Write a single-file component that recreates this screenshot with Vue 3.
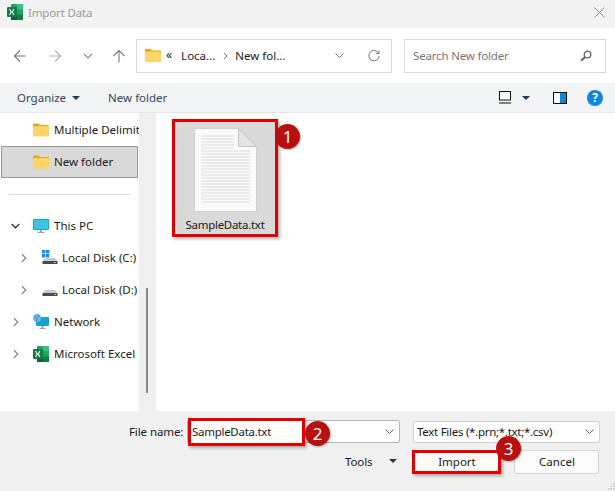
<script setup>
const rows = [
  { label: 'Multiple Delimit', icon: 'folder', indent: 33 },
  { label: 'New folder', icon: 'folder', indent: 33, selected: true },
  { sep: true },
  { label: 'This PC', icon: 'pc', indent: 33, chevron: 'down', chevronAt: 11 },
  { label: 'Local Disk (C:)', icon: 'diskc', indent: 42, text: 62, chevron: 'right', chevronAt: 21 },
  { label: 'Local Disk (D:)', icon: 'disk', indent: 42, text: 62, chevron: 'right', chevronAt: 21 },
  { label: 'Network', icon: 'net', indent: 33, chevron: 'right', chevronAt: 13 },
  { label: 'Microsoft Excel', icon: 'excel', indent: 33, chevron: 'right', chevronAt: 13 },
]
const lines = Array.from({ length: 23 }, (_, i) => i)
</script>

<template>
  <div class="win">
    <header class="title">
      <svg class="xl" width="16" height="16" viewBox="0 0 16 16">
        <rect x="4" width="12" height="16" rx="1" fill="#21a366" />
        <rect x="10" width="6" height="5.3" fill="#33c481" />
        <rect x="4" y="5.3" width="6" height="5.4" fill="#107c41" />
        <rect x="10" y="10.7" width="6" height="5.3" fill="#107c41" />
        <rect x="4" y="10.7" width="6" height="5.3" fill="#185c37" />
        <rect y="3" width="10" height="10" rx="1" fill="#107c41" />
        <path d="M2.6 5l1.6 3-1.6 3M6.900 5L5.300 8l1.600 3M4.200 8h1.100" stroke="#fff" stroke-width="1.100" fill="none" />
      </svg>
      <span class="title-text">Import Data</span>
      <svg class="close" width="11" height="11" viewBox="0 0 11 11"><path d="M.5.500l10 10M10.500.500l-10 10" stroke="#8d8d8d" fill="none" /></svg>
    </header>

    <nav class="nav">
      <svg class="nav-ic" width="14" height="14" viewBox="0 0 14 14"><path d="M13 7H1.500M7 1.500L1.500 7 7 12.500" stroke="#7a7a7a" stroke-width="1.100" fill="none" /></svg>
      <svg class="nav-ic fwd" width="14" height="14" viewBox="0 0 14 14"><path d="M1 7h11.500M7 1.500L12.500 7 7 12.500" stroke="#b4b4b4" stroke-width="1.100" fill="none" /></svg>
      <svg class="nav-ic dn" width="10" height="6" viewBox="0 0 10 6"><path d="M1 1l4 4 4-4" stroke="#8c8c8c" stroke-width="1.100" fill="none" /></svg>
      <svg class="nav-ic up" width="14" height="14" viewBox="0 0 14 14"><path d="M7 13.500V1.500M1.500 7L7 1.500 12.500 7" stroke="#7a7a7a" stroke-width="1.100" fill="none" /></svg>
      <div class="address">
        <svg class="addr-folder" width="16" height="13" viewBox="0 0 16 13">
          <path d="M0 1a1 1 0 011-1h4.500l1.500 1.500h8a1 1 0 011 1V4H0z" fill="#e8a813" />
          <rect y="2.500" width="16" height="10.500" rx="1" fill="#fcd667" />
        </svg>
        <span class="crumb-mark">«</span>
        <span class="crumb first-crumb">Loca...</span>
        <svg width="5" height="8" viewBox="0 0 5 8" class="crumb-sep"><path d="M1 1l3 3-3 3" stroke="#777" fill="none" /></svg>
        <span class="crumb">New fol...</span>
        <svg class="addr-dn" width="9" height="5" viewBox="0 0 9 5"><path d="M.5.500l4 4 4-4" stroke="#777" fill="none" /></svg>
        <svg class="refresh" width="12" height="12" viewBox="0 0 12 12"><path d="M10.600 3.200A5.200 5.200 0 1011.200 6M11 .600v3H8" stroke="#777" stroke-width="1" fill="none" /></svg>
      </div>
      <div class="search">
        <span class="search-text">Search New folder</span>
        <svg width="12" height="12" viewBox="0 0 12 12"><circle cx="7.500" cy="4.500" r="3.300" stroke="#666" stroke-width="1.300" fill="none" /><path d="M5 7L1.200 10.800" stroke="#666" stroke-width="2" /></svg>
      </div>
    </nav>

    <div class="toolbar">
      <span class="tool">Organize</span>
      <i class="caret dark"></i>
      <span class="tool newf">New folder</span>
      <div class="tool-right">
        <svg width="12" height="13" viewBox="0 0 12 13"><rect x=".5" y=".5" width="11" height="8.500" fill="#fff" stroke="#111" /><path d="M0 12h12" stroke="#111" /></svg>
        <i class="caret dark view-caret"></i>
        <svg class="pane" width="14" height="12" viewBox="0 0 14 12"><rect x=".5" y=".5" width="13" height="11" fill="#fff" stroke="#111" /><rect x="7" y="1" width="6" height="10" fill="#0f86d8" /></svg>
        <svg class="help" width="16" height="16" viewBox="0 0 16 16">
          <circle cx="8" cy="8" r="8" fill="#0f84e0" />
          <text x="8" y="12" text-anchor="middle" class="help-q">?</text>
        </svg>
      </div>
    </div>

    <main class="main">
      <aside class="side">
        <template v-for="r in rows" :key="r.label || 'sep'">
          <div v-if="r.sep" class="sep"></div>
          <div v-else class="row" :class="{ selected: r.selected }">
            <svg v-if="r.chevron === 'down'" class="chev" :style="{ left: r.chevronAt + 'px' }" width="9" height="6" viewBox="0 0 9 6"><path d="M.7 1l3.800 3.800L8.300 1" stroke="#333" stroke-width="1.300" fill="none" /></svg>
            <svg v-if="r.chevron === 'right'" class="chev" :style="{ left: r.chevronAt + 'px' }" width="6" height="9" viewBox="0 0 6 9"><path d="M1 .7l3.800 3.800L1 8.300" stroke="#8a8a8a" stroke-width="1.300" fill="none" /></svg>

            <svg class="row-ic" :style="{ left: r.indent + 'px' }" width="16" height="16" viewBox="0 0 16 16">
              <g v-if="r.icon === 'folder'">
                <path d="M0 2.500a1 1 0 011-1h4.500L7 3h8a1 1 0 011 1v2H0z" fill="#e8a813" />
                <rect y="4" width="16" height="10.500" rx="1" fill="#fcd667" />
              </g>
              <g v-if="r.icon === 'pc'">
                <rect y="1" width="16" height="11" rx="1" fill="#1aa3cf" />
                <rect x="1" y="2" width="14" height="9" fill="#3fc3e3" />
                <path d="M7 12h2v2H7zM4.500 14h7v1h-7z" fill="#9aa7ad" />
              </g>
              <g v-if="r.icon === 'diskc'">
                <rect x="0" y="0" width="3.400" height="3.400" fill="#0f8fe0" />
                <rect x="4" y="0" width="3.400" height="3.400" fill="#0f8fe0" />
                <rect x="0" y="4" width="3.400" height="3.400" fill="#0f8fe0" />
                <rect x="4" y="4" width="3.400" height="3.400" fill="#0f8fe0" />
              </g>
              <g v-if="r.icon === 'diskc' || r.icon === 'disk'">
                <path d="M3 8h10l2.500 3.500H.5z" fill="#c9c9c9" />
                <rect x=".5" y="11" width="15" height="3" rx=".5" fill="#4a4a4a" />
                <rect x="12" y="12" width="2" height="1" fill="#7fdc6f" />
              </g>
              <g v-if="r.icon === 'net'">
                <rect x="3" y="3" width="13" height="9" rx="1" fill="#1aa3cf" />
                <path d="M8.500 12h2v2h-2zM6.500 14h6v1h-6z" fill="#9aa7ad" />
                <circle cx="4" cy="4" r="4" fill="#6fb7e6" />
                <path d="M1.500 2.500c2 .5 3 1 2.500 2.500S3 6.500 4 8M5 .500c-.5 1.500.5 2 2 2" stroke="#2f7fc0" fill="none" stroke-width=".8" />
              </g>
              <g v-if="r.icon === 'excel'">
                <rect x="4" width="12" height="16" rx="1" fill="#21a366" />
                <rect x="10" width="6" height="5.300" fill="#33c481" />
                <rect x="4" y="5.300" width="6" height="5.400" fill="#107c41" />
                <rect x="10" y="10.700" width="6" height="5.300" fill="#107c41" />
                <rect x="4" y="10.700" width="6" height="5.300" fill="#185c37" />
                <rect y="3" width="10" height="10" rx="1" fill="#107c41" />
                <path d="M2.600 5l1.600 3-1.600 3M6.900 5L5.300 8l1.600 3M4.200 8h1.100" stroke="#fff" stroke-width="1.100" fill="none" />
              </g>
            </svg>
            <span class="row-text" :style="{ left: (r.text || 54) + 'px' }">{{ r.label }}</span>
          </div>
        </template>
      </aside>

      <div class="track"><div class="thumb"></div></div>

      <section class="files">
        <div class="file">
          <div class="page">
            <svg width="63" height="84" viewBox="0 0 63 84">
              <path d="M.5.500h44l18 18v65H.5z" fill="#fafafa" stroke="#d0d0d0" />
              <path d="M44.500.500v18h18z" fill="#e4e4e4" stroke="#c4c4c4" />
              <path v-for="l in lines" :key="l" :d="`M7 ${8 + l * 3}H${l < 5 ? 40 : 56}`" stroke="#dcdcdc" />
            </svg>
          </div>
          <div class="fname">SampleData.txt</div>
        </div>
      </section>

      <span class="badge b1">1</span>
    </main>

    <footer class="bottom">
      <div class="form-row first">
        <label class="fl">File name:</label>
        <div class="name-input">
          <span class="name-red">SampleData.txt</span>
          <svg class="combo-dn" width="9" height="5" viewBox="0 0 9 5"><path d="M.5.500l4 4 4-4" stroke="#666" fill="none" /></svg>
        </div>
        <div class="type-input">
          <span class="type-text">Text Files (*.prn;*.txt;*.csv)</span>
          <svg width="9" height="5" viewBox="0 0 9 5"><path d="M.5.500l4 4 4-4" stroke="#666" fill="none" /></svg>
        </div>
      </div>
      <div class="form-row second">
        <span class="tools">Tools</span>
        <i class="caret black"></i>
        <button class="btn import">Import</button>
        <button class="btn cancel">Cancel</button>
      </div>
      <span class="badge b2">2</span>
      <span class="badge b3">3</span>
      <svg class="grip" width="7" height="7" viewBox="0 0 7 7" fill="#c4c4c4"><rect x="5" y="0" width="1.500" height="1.500" /><rect x="2.500" y="2.500" width="1.500" height="1.500" /><rect x="5" y="2.500" width="1.500" height="1.500" /><rect x="0" y="5" width="1.500" height="1.500" /><rect x="2.500" y="5" width="1.500" height="1.500" /><rect x="5" y="5" width="1.500" height="1.500" /></svg>
    </footer>
  </div>
</template>

<style scoped>
.win {
  width: 615px;
  height: 491px;
  overflow: hidden;
  background: #fff;
  color: #1a1a1a;
  font-family: "Noto Sans", "Open Sans", sans-serif;
  font-size: 11.500px;
  position: relative;
  display: flex;
  flex-direction: column;
}
.title {
  height: 28px;
  background: #f3f3f3;
  display: flex;
  align-items: center;
  padding: 0 7px;
  flex: none;
}
.xl { margin-right: 5px; margin-top: -4px; }
.title-text { color: #9a9a9a; letter-spacing: -.15px; margin-top: -4px; }
.close { margin-left: auto; margin-top: -4px; margin-right: 3px; }
.nav {
  height: 55px;
  flex: none;
  display: flex;
  align-items: center;
  padding-left: 13px;
}
.nav-ic { flex: none; }
.fwd { margin-left: 21px; }
.dn { margin-left: 21px; }
.up { margin-left: 19px; }
.address {
  width: 256px;
  height: 34px;
  box-sizing: border-box;
  margin-left: 10px;
  border: 1px solid #d9d9d9;
  display: flex;
  align-items: center;
  padding-left: 8px;
}
.crumb-mark { margin-left: 5px; font-size: 12px; margin-top: -3px; }
.crumb { margin-left: 6px; }
.first-crumb { margin-left: 9px; }
.crumb-sep { margin-left: 8px; margin-right: 1px; }
.addr-dn { margin-left: auto; }
.refresh { margin-left: 24px; margin-right: 11px; }
.search {
  width: 202px;
  height: 34px;
  box-sizing: border-box;
  margin-left: 12px;
  border: 1px solid #d9d9d9;
  display: flex;
  align-items: center;
  justify-content: space-between;
  padding: 0 13px 0 8px;
  color: #767676;
}
.search-text { letter-spacing: -.18px; }
.toolbar {
  height: 29px;
  flex: none;
  background: #f3f4f6;
  border-bottom: 1px solid #e6e6e6;
  display: flex;
  align-items: center;
  padding-left: 17px;
  color: #33475b;
}
.caret {
  width: 0;
  height: 0;
  border-left: 4px solid transparent;
  border-right: 4px solid transparent;
  border-top: 4px solid #1f3a5f;
  margin-left: 6px;
}
.caret.black { border-top-color: #333; }
.newf { margin-left: 28px; }
.tool-right {
  margin-left: auto;
  padding-right: 12px;
  display: flex;
  align-items: center;
}
.view-caret { margin-left: 11px; }
.pane { margin-left: 23px; }
.help { margin-left: 20px; }
.help-q { fill: #fff; font-size: 12px; font-weight: 700; font-family: "Noto Sans", sans-serif; }
.main {
  flex: 1;
  min-height: 0;
  display: flex;
  position: relative;
}
.side {
  width: 139px;
  flex: none;
  overflow: hidden;
  padding-top: 1px;
}
.row {
  height: 32px;
  position: relative;
  box-sizing: border-box;
  white-space: nowrap;
}
.row.selected {
  background: #d9d9d9;
  border: 1px solid #999;
  margin-left: 1px;
  width: 137px;
}
.row.selected .row-ic { margin-left: -2px; margin-top: -1px; }
.row.selected .row-text { margin-left: -2px; margin-top: -1px; }
.chev { position: absolute; top: 50%; transform: translateY(-50%); }
.row-ic { position: absolute; top: 8px; }
.row-text { position: absolute; top: 7px; line-height: 18px; }
.sep {
  height: 1px;
  background: #d9d9d9;
  margin: 16px 9px 15px;
}
.track {
  width: 16px;
  flex: none;
  background: #f0f0f0;
  position: relative;
  margin-right: 2px;
  border-right: 1px solid #eee;
}
.thumb {
  position: absolute;
  left: 7px;
  top: 175px;
  width: 2px;
  height: 105px;
  background: #8a8a8a;
}
.files {
  flex: 1;
  padding: 6px 0 0 14px;
}
.file {
  width: 106px;
  height: 118px;
  box-sizing: border-box;
  background: #d9d9d9;
  border: 3px solid #e00000;
  box-shadow: 2px 2px 3px rgba(0, 0, 0, .3);
  display: flex;
  flex-direction: column;
  align-items: center;
  padding-top: 6px;
}
.page { height: 85px; }
.fname { margin-top: 4px; line-height: 16px; letter-spacing: -.28px; }
.badge {
  position: absolute;
  width: 25px;
  height: 25px;
  border-radius: 50%;
  background: #b80f0f;
  color: #fff;
  font-size: 17px;
  text-align: center;
  line-height: 25px;
  box-shadow: 1px 1px 2px rgba(0, 0, 0, .3);
}
.b1 { left: 275px; top: 11px; }
.bottom {
  height: 80px;
  flex: none;
  background: #f0f0f0;
  position: relative;
  margin-top: -2px;
}
.form-row { display: flex; align-items: center; position: relative; }
.first { padding-top: 9px; }
.fl { margin-left: 129px; width: 58px; white-space: nowrap; letter-spacing: -.1px; }
.name-input {
  width: 213px;
  height: 23px;
  box-sizing: border-box;
  background: #fff;
  border: 1px solid #b5b5b5;
  border-radius: 2px;
  display: flex;
  align-items: center;
  justify-content: flex-end;
  padding-right: 5px;
  position: relative;
}
.name-red {
  position: absolute;
  left: 0;
  top: -3px;
  width: 117px;
  height: 28px;
  box-sizing: border-box;
  border: 3px solid #e00000;
  background: #fff;
  box-shadow: 2px 2px 3px rgba(0, 0, 0, .3);
  line-height: 22px;
  padding-left: 1px;
  white-space: nowrap;
  letter-spacing: -.28px;
}
.type-input {
  width: 187px;
  height: 22px;
  box-sizing: border-box;
  margin-left: 13px;
  background: #fff;
  border: 1px solid #d0d0d0;
  border-radius: 2px;
  display: flex;
  align-items: center;
  justify-content: space-between;
  padding: 0 5px 0 3px;
  white-space: nowrap;
}
.type-text { letter-spacing: -.28px; }
.second { padding-top: 7px; }
.tools { margin-left: 345px; letter-spacing: -.1px; margin-top: -2px; }
.second .caret { margin-left: 17px; margin-top: -2px; }
.btn {
  height: 24px;
  box-sizing: border-box;
  font: inherit;
  color: inherit;
  background: #fbfbfb;
  border: 1px solid #d4d4d4;
  border-radius: 3px;
  padding: 0 0 2px;
}
.import {
  width: 89px;
  margin-left: 15px;
  border: 3px solid #e00000;
  border-radius: 0;
  box-shadow: 2px 2px 3px rgba(0, 0, 0, .3);
}
.cancel { width: 85px; margin-left: 13px; }
.b2 { left: 305px; top: 10px; }
.b3 { left: 496px; top: 25px; }
.grip { position: absolute; right: 0; bottom: 1px; }
</style>
